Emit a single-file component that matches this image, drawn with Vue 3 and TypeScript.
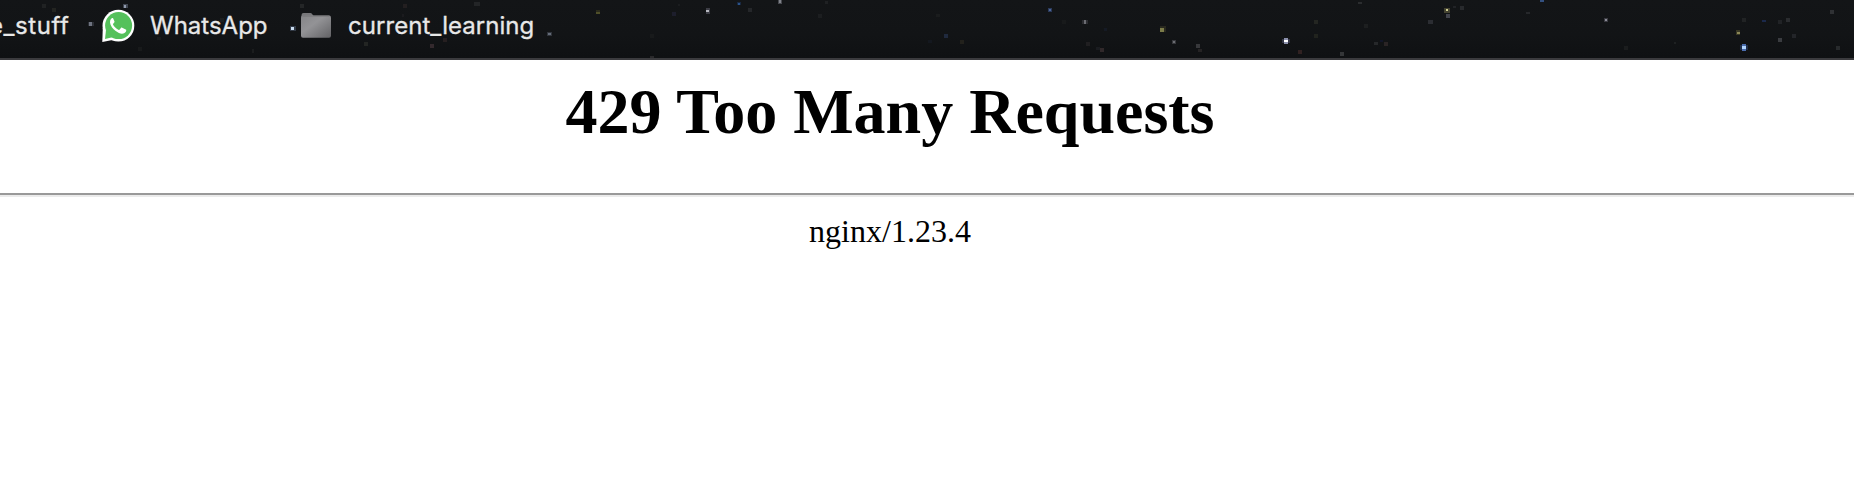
<script setup lang="ts">
interface Star {
  x: number
  y: number
  w: number
  h: number
  color: string
}

// x, y, width, height, colour of each speck in the toolbar's night sky
const specks: [number, number, number, number, string][] = [
  [42, 4, 4, 4, '#202223'], [52, 8, 4, 4, '#232421'], [123, 4, 5, 4, '#414752'], [124, 5, 2, 3, '#9099ab'],
  [88, 22, 6, 4, '#2b2e34'], [89, 22, 3, 4, '#6e7380'], [290, 26, 6, 5, '#323a46'], [291, 27, 3, 3, '#c9dcf0'],
  [157, 37, 4, 3, '#191b1c'], [138, 47, 4, 4, '#181a1b'], [252, 49, 2, 4, '#1b1d1e'], [220, 18, 4, 4, '#1c1e1f'],
  [300, 4, 4, 4, '#242627'], [403, 4, 4, 4, '#231f20'], [402, 14, 2, 3, '#1b1b1e'], [474, 2, 6, 4, '#232527'],
  [364, 42, 4, 4, '#232523'], [430, 44, 4, 4, '#33292d'], [443, 38, 4, 4, '#261f20'], [547, 32, 5, 4, '#30343b'], [548, 33, 3, 2, '#646c79'],
  [596, 10, 4, 2, '#2b2b1c'], [596, 12, 4, 2, '#4f4f29'], [672, 12, 4, 4, '#1d1e2c'], [678, 4, 2, 2, '#1b1d1f'],
  [706, 8, 4, 6, '#3c3d45'], [706, 10, 3, 2, '#b6b7bf'], [737, 2, 4, 3, '#182841'], [738, 3, 2, 2, '#2b5389'],
  [748, 8, 4, 4, '#25272a'], [778, 0, 4, 4, '#46484e'], [779, 0, 2, 3, '#80838a'], [825, 1, 3, 3, '#1f2123'], [818, 14, 4, 4, '#1c1e20'],
  [650, 34, 4, 4, '#181a1b'], [650, 56, 4, 2, '#29292b'],
  [936, 14, 4, 3, '#1a1c1d'], [944, 34, 4, 4, '#202a3e'], [960, 40, 4, 4, '#22211c'], [928, 40, 4, 3, '#14181f'],
  [1048, 8, 4, 4, '#2a3959'], [1049, 9, 2, 2, '#4c6599'], [1062, 20, 4, 4, '#181a1b'], [1082, 20, 6, 4, '#2b2c30'], [1084, 20, 2, 4, '#6b6c72'],
  [1104, 28, 3, 3, '#151a24'], [1086, 42, 4, 4, '#201f21'], [1100, 48, 4, 4, '#30282a'], [1096, 47, 4, 3, '#1a1c20'],
  [1160, 26, 6, 6, '#29291f'], [1160, 28, 4, 4, '#7b7b49'], [1172, 40, 4, 4, '#36373b'], [1173, 41, 2, 2, '#6b6d72'],
  [1196, 44, 4, 4, '#37383b'], [1198, 49, 4, 3, '#252324'],
  [1358, 2, 4, 2, '#2b2d2f'], [1314, 20, 4, 4, '#242622'], [1314, 34, 4, 4, '#21231e'], [1364, 24, 4, 4, '#1d1f20'],
  [1282, 39, 8, 4, '#333545'], [1284, 38, 4, 6, '#8b90ac'], [1284, 40, 4, 2, '#ffffff'], [1298, 50, 4, 4, '#302121'],
  [1340, 52, 4, 4, '#343638'], [1374, 42, 4, 3, '#26282a'], [1384, 42, 4, 4, '#2a2425'], [1380, 40, 3, 2, '#121629'],
  [1428, 20, 5, 4, '#2b2d32'], [1444, 8, 6, 5, '#444331'], [1446, 9, 2, 2, '#d0cf90'], [1446, 14, 4, 4, '#42444c'],
  [1453, 6, 3, 2, '#212326'], [1460, 6, 4, 4, '#282a2d'], [1526, 12, 4, 2, '#26282b'], [1540, 0, 4, 2, '#33507f'],
  [1604, 18, 4, 4, '#3a3a41'], [1605, 19, 2, 2, '#8a8b96'], [1624, 46, 4, 4, '#1b1d1e'], [1674, 42, 2, 2, '#1e2122'],
  [1742, 18, 4, 4, '#212324'], [1762, 20, 4, 2, '#1b294b'], [1736, 30, 4, 5, '#393825'], [1737, 32, 3, 2, '#8a8656'],
  [1740, 45, 8, 5, '#1f2c46'], [1742, 44, 4, 7, '#4a6cad'], [1742, 46, 4, 3, '#b0d4ff'],
  [1778, 20, 4, 4, '#212326'], [1786, 18, 4, 4, '#2a2c2f'], [1778, 38, 4, 4, '#3a3c40'], [1792, 34, 4, 4, '#232529'],
  [1830, 10, 4, 4, '#2f3134'], [1836, 46, 4, 4, '#272a2c'],
]

const stars: Star[] = specks.map(([x, y, w, h, color]) => ({ x, y, w, h, color }))
</script>

<template>
  <div class="window">
    <nav class="bookmarks">
      <svg class="sky" width="1854" height="58" viewBox="0 0 1854 58" shape-rendering="crispEdges" aria-hidden="true">
        <rect v-for="(s, i) in stars" :key="i" :x="s.x" :y="s.y" :width="s.w" :height="s.h" :fill="s.color" />
      </svg>
      <span class="label first">e_stuff</span>
      <svg class="whatsapp" width="34" height="34" viewBox="0 0 34 34" aria-hidden="true">
        <circle cx="17.4" cy="16.7" r="15.9" fill="#fff" />
        <path d="M1.3 33 1.8 19 14 30.6Z" fill="#fff" />
        <circle cx="17.6" cy="16.6" r="13.5" fill="#55c15b" />
        <path d="M4 30 5 21 12.5 28Z" fill="#55c15b" />
        <path d="M11.5 9.1c-.7 0-2.7 1.4-2.5 4.3.2 3.1 2.9 6.5 5.7 8.7 3.2 2.4 6.4 3.4 8.8 1.9 1.5-1 1.9-2.1 1.7-3.3l-4-2c-.5-.2-.9-.1-1.3.4l-1.2 1.5c-.4.4-.8.4-1.3.1-2.4-1.1-4.1-2.7-5.3-4.9-.2-.5-.1-.8.3-1.2l1-1.3c.2-.4.2-.7 0-1.1l-1.2-2.7c-.2-.3-.4-.4-.7-.4Z" fill="#fff" />
      </svg>
      <span class="label chat">WhatsApp</span>
      <svg class="folder" width="30" height="26" viewBox="0 0 30 26" aria-hidden="true">
        <defs>
          <linearGradient id="folder-face" x1="0" y1="0" x2="1" y2="1">
            <stop offset="0" stop-color="#858588" />
            <stop offset=".4" stop-color="#939396" />
            <stop offset="1" stop-color="#626265" />
          </linearGradient>
        </defs>
        <path d="M.5 6V3Q.5 1 2.5 1h7q1 0 1.6.9L12.6 4V6Z" fill="#77777a" />
        <rect y="3.6" width="30" height="22.2" rx="2" fill="url(#folder-face)" />
        <path d="M1.5 4.1h27" stroke="#77777a" stroke-width="1" />
      </svg>
      <span class="label learning">current_learning</span>
    </nav>
    <main class="page">
      <h1>429 Too Many Requests</h1>
      <hr />
      <p>nginx/1.23.4</p>
    </main>
  </div>
</template>

<style>
html,
body {
  background: #fff;
  overflow: hidden;
}
</style>

<style scoped>
.window {
  width: 1854px;
  height: 482px;
  overflow: hidden;
  background: #fff;
}
.bookmarks {
  position: relative;
  box-sizing: border-box;
  display: flex;
  align-items: flex-start;
  height: 60px;
  border-bottom: 2px solid #3b3b3e;
  background: linear-gradient(#131517, #121416 60%, #0f1113);
  overflow: hidden;
}
.sky {
  position: absolute;
  left: 0;
  top: 0;
}
.label {
  position: relative;
  flex: none;
  margin-top: 11px;
  font: 400 24px/30px Inter, "Liberation Sans", sans-serif;
  -webkit-text-stroke: 0.3px #e8e8e8;
  color: #e8e8e8;
  white-space: nowrap;
}
.first {
  margin-left: -11px;
  width: 81px;
  letter-spacing: 0.55px;
}
.whatsapp {
  position: relative;
  flex: none;
  margin: 9px 0 0 31px;
}
.chat {
  margin-left: 15px;
  width: 118px;
}
.folder {
  position: relative;
  flex: none;
  margin: 12px 0 0 33px;
}
.learning {
  margin-left: 17px;
  letter-spacing: 0.05px;
}
.page {
  font-family: "Liberation Serif", "Times New Roman", serif;
  color: #000;
  text-align: center;
}
h1 {
  margin: 0;
  padding: 15px 74px 0 0;
  font-size: 64px;
  line-height: 74px;
  font-weight: 700;
}
hr {
  box-sizing: border-box;
  height: 4px;
  margin: 44px 0 0;
  border: 0;
  border-top: 2px solid #999;
  border-bottom: 2px solid #ebebeb;
}
p {
  margin: 0;
  padding: 16px 74px 0 0;
  font-size: 32px;
  line-height: 36px;
}
</style>
